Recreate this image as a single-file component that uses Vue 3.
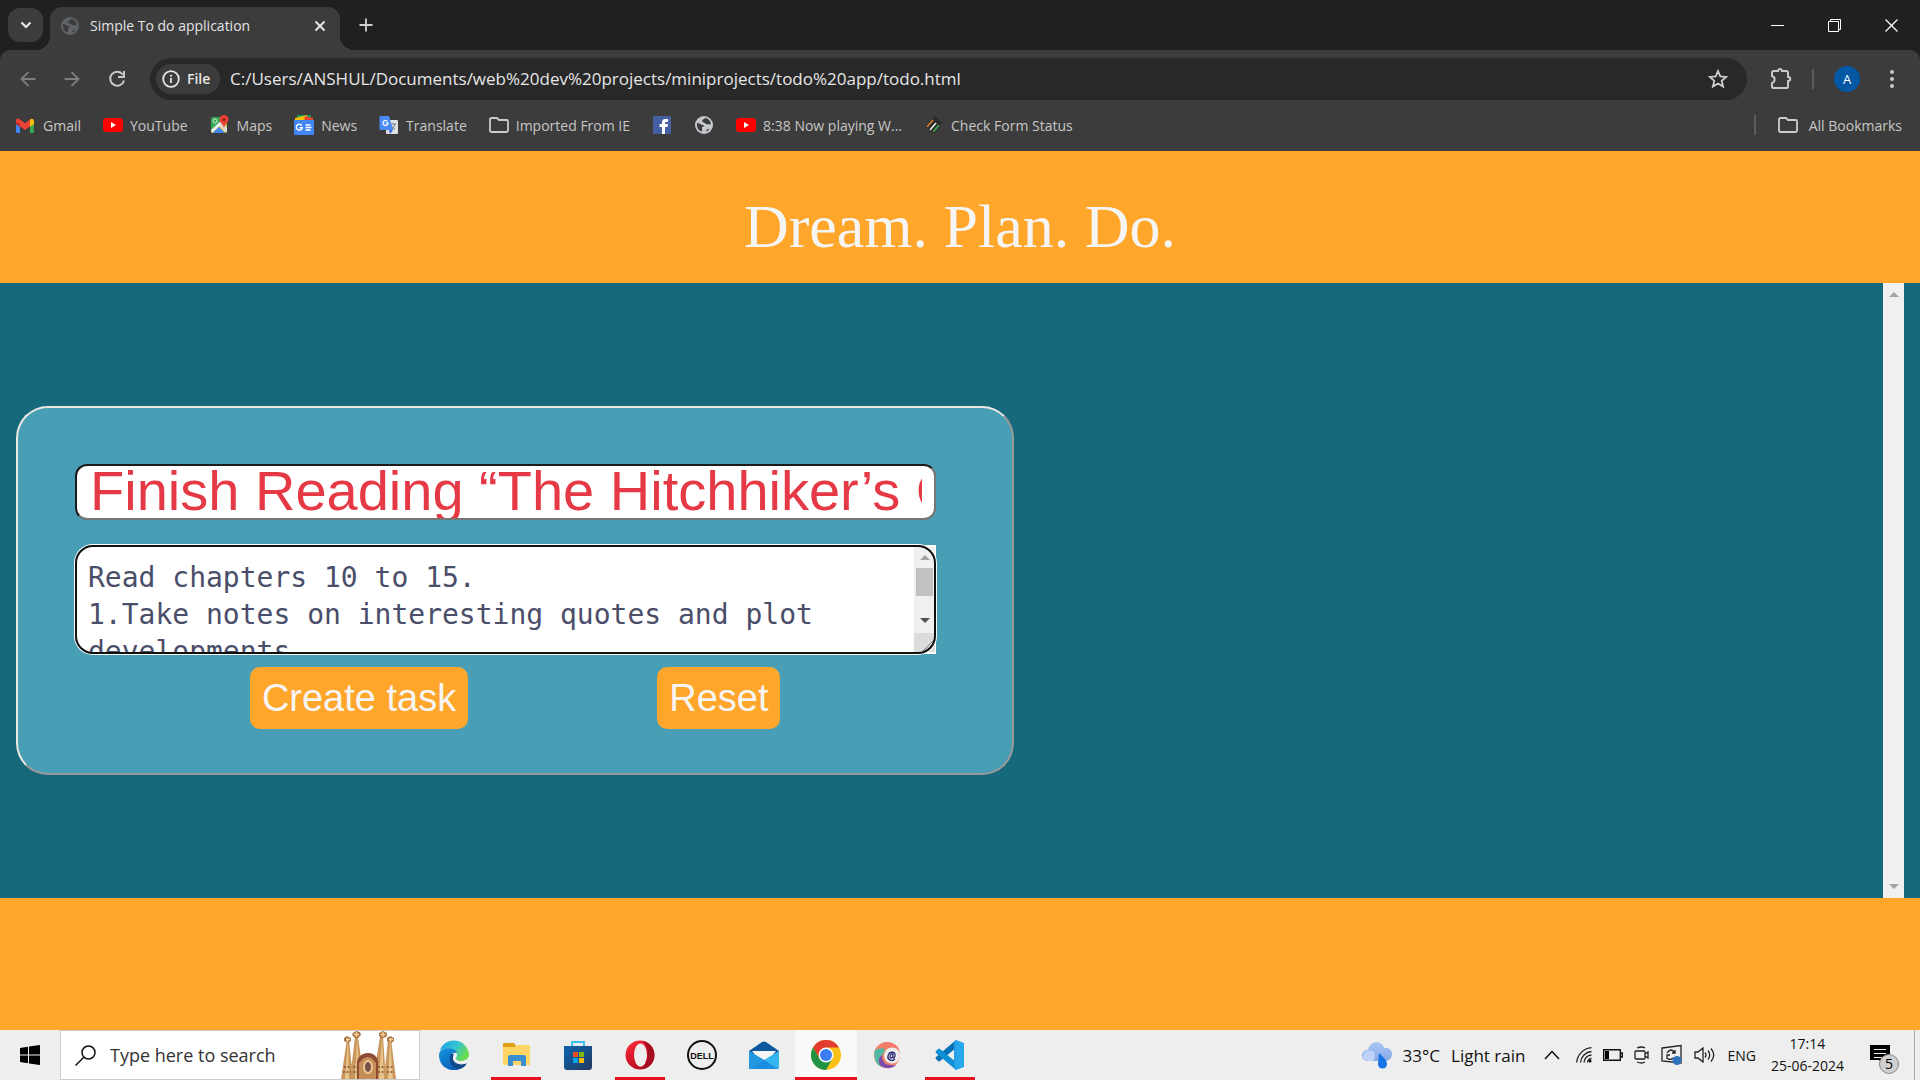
<script setup>
import { ref } from 'vue'

const title = ref('Finish Reading “The Hitchhiker’s Guide to the Galaxy”')
const details = ref('Read chapters 10 to 15.\n1.Take notes on interesting quotes and plot developments.\n2.Write a short summary.')
const address = ref('C:/Users/ANSHUL/Documents/web%20dev%20projects/miniprojects/todo%20app/todo.html')

const bookmarks = [
  { icon: 'gmail', label: 'Gmail' },
  { icon: 'youtube', label: 'YouTube' },
  { icon: 'maps', label: 'Maps' },
  { icon: 'news', label: 'News' },
  { icon: 'translate', label: 'Translate' },
  { icon: 'folder', label: 'Imported From IE' },
  { icon: 'facebook', label: '' },
  { icon: 'globe', label: '' },
  { icon: 'youtube', label: '8:38 Now playing W...' },
  { icon: 'form', label: 'Check Form Status' }
]

const apps = [
  { name: 'edge' },
  { name: 'explorer', open: true },
  { name: 'store' },
  { name: 'opera', open: true },
  { name: 'dell' },
  { name: 'mail' },
  { name: 'chrome', active: true },
  { name: 'swirl' },
  { name: 'code', open: true }
]

function reset() {
  title.value = ''
  details.value = ''
}
</script>

<template>
  <div class="screen">
    <div class="tabstrip">
      <button class="tab-search" aria-label="Search tabs">
        <svg width="12" height="8" viewBox="0 0 12 8"><path d="M1.500 1.500 6 6l4.500-4.500" fill="none" stroke="#e8e8e8" stroke-width="2.200" /></svg>
      </button>
      <div class="tab">
        <svg width="18" height="18" viewBox="0 0 18 18"><circle cx="9" cy="9" r="9" fill="#5f6368" /><path d="M2 7c3 0 3.500 2 6 2 1.500 0 1 2-1 2v4.500C4 15 1.500 12 2 7zM10 2c-1 1.500-3 1.500-3 3.500 1.500 0 1 1.500 3 1.500 1 2 3 1 5.800 1.500C16 5 13 2 10 2zM11 15.500c0-2 2-2.500 3.500-3-.5 1.500-2 2.500-3.500 3z" fill="#3c3c3c" /></svg>
        <span class="tab-title">Simple To do application</span>
        <button class="plain" aria-label="Close tab">
          <svg width="12" height="12" viewBox="0 0 12 12"><path d="m1.500 1.500 9 9m0-9-9 9" stroke="#e3e3e3" stroke-width="2" /></svg>
        </button>
      </div>
      <button class="plain new-tab" aria-label="New tab">
        <svg width="14" height="14" viewBox="0 0 14 14"><path d="M7 0.500v13M0.500 7h13" stroke="#d0d0d0" stroke-width="1.800" /></svg>
      </button>
      <div class="window-controls">
        <button class="plain" aria-label="Minimize"><svg width="13" height="13" viewBox="0 0 13 13"><path d="M0 6.500h13" stroke="#fff" /></svg></button>
        <button class="plain" aria-label="Restore"><svg width="13" height="13" viewBox="0 0 13 13"><path d="M.5 2.500h10v10H.5zM2.500 2.500v-2h10v10h-2" fill="none" stroke="#fff" /></svg></button>
        <button class="plain" aria-label="Close"><svg width="13" height="13" viewBox="0 0 13 13"><path d="m.5.5 12 12m0-12-12 12" stroke="#fff" stroke-width="1.200" /></svg></button>
      </div>
    </div>

    <div class="toolbar">
      <div class="nav">
        <button class="plain" aria-label="Back"><svg width="16" height="16" viewBox="0 0 16 16"><path d="M15.500 8H2M8.500 1 1.500 8l7 7" fill="none" stroke="#7d7d7d" stroke-width="1.800" /></svg></button>
        <button class="plain" aria-label="Forward"><svg width="16" height="16" viewBox="0 0 16 16"><path d="M.5 8H14M7.500 1l7 7-7 7" fill="none" stroke="#7d7d7d" stroke-width="1.800" /></svg></button>
        <button class="plain" aria-label="Reload"><svg width="18" height="18" viewBox="0 0 18 18"><path d="M14.800 4.500A7 7 0 1 0 16 10.500M16 1v6h-6" fill="none" stroke="#c9c9c9" stroke-width="2" /></svg></button>
      </div>
      <div class="omnibox">
        <button class="chip">
          <svg width="18" height="18" viewBox="0 0 18 18"><circle cx="9" cy="9" r="7.800" fill="none" stroke="#e6e6e6" stroke-width="1.800" /><path d="M9 8v5M9 4.800v2" stroke="#e6e6e6" stroke-width="1.800" /></svg>
          File
        </button>
        <input v-model="address" class="address" aria-label="Address" spellcheck="false">
        <button class="plain" aria-label="Bookmark this tab"><svg width="20" height="20" viewBox="0 0 20 20"><path d="m10 2 2.300 5.400 5.900.5-4.500 3.900 1.400 5.800L10 14.500l-5.100 3.100 1.400-5.800L1.800 7.900l5.900-.5z" fill="none" stroke="#cfcfcf" stroke-width="1.800" /></svg></button>
      </div>
      <div class="tools">
        <button class="plain" aria-label="Extensions"><svg width="22" height="22" viewBox="0 0 22 22"><path d="M2 4.500Q2 3 3.500 3H8c0-2.700 4-2.700 4 0h4.500Q18 3 18 4.500V9c3 0 3 4 0 4v5.500q0 1.500-1.500 1.500h-13Q2 20 2 18.500V15c3.500-1 3.500-6 0-7z" fill="none" stroke="#c9c9c9" stroke-width="2" /></svg></button>
        <span class="rule"></span>
        <button class="avatar" aria-label="Profile">A</button>
        <button class="plain" aria-label="Menu"><svg width="4" height="18" viewBox="0 0 4 18"><circle v-for="y in [2, 9, 16]" :key="y" cx="2" :cy="y" r="2" fill="#c9c9c9" /></svg></button>
      </div>
    </div>

    <nav class="bookmarks">
      <a v-for="(b, i) in bookmarks" :key="i" href="#" class="bookmark" :aria-label="b.label || b.icon">
        <svg width="20" height="20" viewBox="0 0 20 20">
          <g v-if="b.icon === 'gmail'"><path d="M0 5h4v13H1.500Q0 18 0 16.500z" fill="#4285f4" /><path d="M14 5h4v11.500q0 1.500-1.500 1.500H14z" fill="#34a853" /><path d="m0 5 4 3v4L0 9z" fill="#c5221f" /><path d="M0 6c0-2.500 2-3 3.500-2L9 8.200 14 4.500v7L9 15l-5-3.500V9L0 7z" fill="#ea4335" /><path d="M14 4.500c2-1.500 4-.5 4 2V9l-4 3z" fill="#fbbc04" /></g>
          <g v-else-if="b.icon === 'youtube'"><rect y="3" width="20" height="14" rx="3.500" fill="#f00" /><path d="m8 7 5 3-5 3z" fill="#fff" /></g>
          <g v-else-if="b.icon === 'maps'"><rect x="1" y="2" width="16" height="16" rx="2" fill="#34a853" /><path d="M1 16 16 2l1 14-3 2-5-5-7 5z" fill="#fbd04b" /><path d="m3 18 6-6 6 6z" fill="#4285f4" /><path d="m1 15 14-13 2 2L2 18z" fill="#eee" /><path d="m3 18 6-6 6 6z" fill="#4285f4" /><path d="m9 10 8 8v-5l-5-5z" fill="#dadce0" /><circle cx="5" cy="6" r="2" fill="none" stroke="#d8f2dd" /><path d="M14 0a4.500 4.500 0 0 1 4.500 4.500C18.500 8 15 8.500 14 13c-1-4.500-4.500-5-4.500-8.500A4.500 4.500 0 0 1 14 0z" fill="#ea4335" /><circle cx="14" cy="4.500" r="1.600" fill="#972018" /></g>
          <g v-else-if="b.icon === 'news'"><path d="M3 0h14v5H3z" fill="#0c9d58" /><path d="m1 3 12-3 2 6H1z" fill="#fbbc04" /><path d="m11 1 8 2v4h-9z" fill="#ea4335" /><rect y="5" width="20" height="15" rx="1" fill="#4285f4" /><path d="M7.800 10.500A3 3 0 1 0 8.300 12.700H5.500M11.500 10h5M11.500 12.500h6M11.500 15h5" fill="none" stroke="#fff" stroke-width="1.400" /></g>
          <g v-else-if="b.icon === 'translate'"><rect x="7" y="5" width="12" height="14" rx="1" fill="#dfe1e5" /><path d="M11 9h6m-3-1v1m2 0c-.5 3-3 5-4 5.500M12 10c1 2 3 4 4 4.500" fill="none" stroke="#6d7780" /><path d="M1 1h9l4 14H2q-1.500 0-1.500-1.500V1.500z" fill="#4a8af4" /><path d="m10 15 1 4 3-4z" fill="#3367d6" /><path d="M8.500 6.500A2.500 2.500 0 1 0 9 8H6.500" fill="none" stroke="#fff" stroke-width="1.200" /></g>
          <path v-else-if="b.icon === 'folder'" d="M1 4.500Q1 3 2.500 3H8l2 2h7.500Q19 5 19 6.500v9q0 1.500-1.500 1.500h-15Q1 17 1 15.500z" fill="none" stroke="#cdcdcd" stroke-width="1.800" />
          <g v-else-if="b.icon === 'facebook'"><rect x="1" y="1" width="18" height="18" rx="1" fill="#4560a0" /><path d="M10 19v-7H7.500V9H10V7.500C10 4.800 11.500 4 13 4h3v3h-2q-1 0-1 1v1h3l-.5 3H13v7z" fill="#fff" /></g>
          <g v-else-if="b.icon === 'globe'"><circle cx="10" cy="10" r="9" fill="#c4c7cc" /><path d="M3 8c3 0 3.500 2 6 2 1.500 0 1 2-1 2v4.500C5 16 2.500 13 3 8zM11 3c-1 1.500-3 1.500-3 3.500 1.500 0 1 1.500 3 1.500 1 2 3 1 5.800 1.500C17 6 14 3 11 3zM12 16.500c0-2 2-2.500 3.500-3-.5 1.500-2 2.500-3.500 3z" fill="#3c3c3c" /></g>
          <g v-else><path d="m11 1 7 7-8 11-9-7z" fill="#2c2c2c" /><path d="m3 12 6-7" stroke="#d9822f" stroke-width="1.600" /><path d="m6 15 6-7" stroke="#e8e8e8" stroke-width="1.600" /><path d="m9 17 6-7" stroke="#3fae49" stroke-width="1.600" /></g>
        </svg>
        <span v-if="b.label">{{ b.label }}</span>
      </a>
      <span class="rule push"></span>
      <a href="#" class="bookmark all">
        <svg width="20" height="20" viewBox="0 0 20 20"><path d="M1 4.500Q1 3 2.500 3H8l2 2h7.500Q19 5 19 6.500v9q0 1.500-1.500 1.500h-15Q1 17 1 15.500z" fill="none" stroke="#cdcdcd" stroke-width="1.800" /></svg>
        <span>All Bookmarks</span>
      </a>
    </nav>

    <header class="banner"><h1>Dream. Plan. Do.</h1></header>

    <main class="content">
      <div class="workspace">
        <form class="card" @submit.prevent @reset.prevent="reset">
          <input v-model="title" class="task-title" aria-label="Task title" spellcheck="false">
          <div class="details">
            <textarea v-model="details" aria-label="Task details" spellcheck="false"></textarea>
            <div class="details-bar">
              <svg class="up" width="10" height="5" viewBox="0 0 10 5"><path d="m0 5 5-5 5 5z" fill="#a3a3a3" /></svg>
              <span class="thumb"></span>
              <svg class="down" width="10" height="5" viewBox="0 0 10 5"><path d="m0 0 5 5 5-5z" fill="#505050" /></svg>
              <svg class="grip" width="21" height="19" viewBox="0 0 21 19"><path d="M0 0h21v19H0z" fill="#dcdcdc" /><path d="m9 18 11-11M14 18l6-6" stroke="#777" /></svg>
            </div>
          </div>
          <div class="actions">
            <button type="submit">Create task</button>
            <button type="reset">Reset</button>
          </div>
        </form>
      </div>
      <div class="page-bar">
        <svg width="10" height="5" viewBox="0 0 10 5"><path d="m0 5 5-5 5 5z" fill="#a3a3a3" /></svg>
        <svg width="10" height="5" viewBox="0 0 10 5"><path d="m0 0 5 5 5-5z" fill="#a3a3a3" /></svg>
      </div>
    </main>

    <footer class="foot"></footer>

    <div class="taskbar">
      <button class="plain start" aria-label="Start"><svg width="20" height="20" viewBox="0 0 20 20"><path d="m0 3 8-1.200v7.700H0zM9 1.600 20 0v9.500H9zM0 10.500h8v7.700L0 17zM9 10.500h11V20L9 18.400z" /></svg></button>
      <label class="search">
        <svg width="21" height="21" viewBox="0 0 21 21"><circle cx="13.500" cy="7.500" r="6.500" fill="none" stroke="#111" stroke-width="1.500" /><path d="m9 12-8.500 8.500" stroke="#111" stroke-width="1.500" /></svg>
        <input placeholder="Type here to search" aria-label="Search">
        <svg width="56" height="48" viewBox="0 0 56 48">
          <path d="m7 8-6 40h12L9 8zM15 6l-5 42h14L18 6zM40 6l-7 42h13L43 6zM48 8l-4 40h12L51 8z" fill="#c9975c" />
          <path d="M8 9 5 48h4zM17 7l-2 41h5zM42 7l-3 41h5zM50 9l-2 39h5z" fill="#e9c58b" />
          <path d="M17 48V30q3-8 11-8t10 8v18z" fill="#8d4b33" /><path d="M19 48V32q9-12 17 0v16z" fill="#c58d58" />
          <ellipse cx="28" cy="36" rx="5" ry="7" fill="#efc891" /><ellipse cx="28" cy="36" rx="3" ry="5" fill="#77534b" />
          <path d="M4 36h6M3 41h8M13 36h7M13 41h7M38 36h7M38 41h7M47 36h6M47 41h6" stroke="#80563a" stroke-width="1.500" stroke-dasharray="2 1.500" />
          <path d="m4 7 3-2 4 2v3l-3 2-4-2zM13 2l3-2 4 1 1 3-3 3h-3l-3-3zM39 2l4-2 4 2v3l-3 2h-3l-2-2zM47 7l3-2 4 2v3l-3 2-4-2z" fill="#a97545" />
          <path d="M16.500 1v5M14 3.500h5M43 1v5M40.500 3.500h5M7.500 7v4M6 8.500h4M50.500 7v4M49 8.500h4" stroke="#ffd49a" stroke-width="1.300" />
        </svg>
      </label>
      <div class="apps">
        <button v-for="a in apps" :key="a.name" class="app" :class="{ open: a.open, active: a.active }" :aria-label="a.name">
          <svg width="30" height="30" viewBox="0 0 30 30">
            <g v-if="a.name === 'edge'">
              <defs><linearGradient id="edgeTop" x1="0" y1="0" x2="1" y2="0.500"><stop offset="0" stop-color="#1b9de2" /><stop offset=".55" stop-color="#36c4d4" /><stop offset="1" stop-color="#68dd4d" /></linearGradient><linearGradient id="edgeLow" x1="0" y1="0" x2=".6" y2="1"><stop offset="0" stop-color="#1796e0" /><stop offset="1" stop-color="#0a5cb8" /></linearGradient></defs>
              <path d="M1 11C4-3 27-4 30 14c0 5-4 7-8 7-5 0-6-2-4-5 1-7-10-10-17-5z" fill="url(#edgeTop)" />
              <path d="M0 15C0 7 16 6 18 13c-7-2-8 8-1 12 3 1 7 0 9-1-3 5-8 7-13 6C5 29 0 23 0 15z" fill="url(#edgeLow)" />
              <path d="M12 14c-4 7 1 15 9 15 3-1 6-3 7-6-5 3-13 1-14-4 0-2 0-4 1-5z" fill="#114a8b" />
            </g>
            <g v-else-if="a.name === 'explorer'"><path d="M2 4q0-1 1-1h10l2 3v5H2z" fill="#dda013" /><path d="M2 7h12l2-2h12q1 0 1 1v19H2z" fill="#ffd666" /><path d="M7 26v-9q0-2 2-2h14q2 0 2 2v9h-5v-5h-8v5z" fill="#3b8ed0" /></g>
            <g v-else-if="a.name === 'store'"><defs><linearGradient id="bag" x2="1" y2="1"><stop stop-color="#0b64b0" /><stop offset="1" stop-color="#243a60" /></linearGradient></defs><path d="M9 7V2h12v5" fill="none" stroke="#3ec1f0" stroke-width="2" /><path d="M1 6h28v21q0 3-3 3H4q-3 0-3-3z" fill="url(#bag)" /><path d="M10 12h5v5h-5z" fill="#f25022" /><path d="M16 12h5v5h-5z" fill="#7fba00" /><path d="M10 18h5v5h-5z" fill="#00a4ef" /><path d="M16 18h5v5h-5z" fill="#ffb900" /></g>
            <g v-else-if="a.name === 'opera'"><defs><linearGradient id="ring" x2="0.500" y2="1"><stop stop-color="#ff2a38" /><stop offset="1" stop-color="#b40d20" /></linearGradient></defs><ellipse cx="15" cy="15" rx="14.500" ry="14.500" fill="url(#ring)" /><path d="M17 1c17 2 16 27 0 28 8-5 8-23 0-28z" fill="#a50f20" /><ellipse cx="15.500" cy="15" rx="6.500" ry="11.500" fill="#eee" /></g>
            <g v-else-if="a.name === 'dell'"><circle cx="15" cy="15" r="14" fill="none" stroke="#111" stroke-width="2" /><text x="15" y="18.500" text-anchor="middle" font-family="Liberation Sans, sans-serif" font-weight="700" font-size="9" fill="#111">DELL</text></g>
            <g v-else-if="a.name === 'mail'"><path d="M0 11 13 2q2-1 4 0l13 9v5H0z" fill="#0d579f" /><path d="M3 11h24l-9 11h-6z" fill="#f5f5f5" /><path d="m0 11 15 9 15-9v16q0 2-1 2H0z" fill="#36b6ee" /><path d="m0 11 15 9-14 9H0z" fill="#2299df" /><path d="m15 20 14 9H1z" fill="#1c8ee0" /></g>
            <g v-else-if="a.name === 'chrome'"><circle cx="15" cy="15" r="15" fill="#fbc116" /><path d="M2 7.500A15 15 0 0 1 28 7.500H15v7.500l-6.500 4z" fill="#e33b2e" /><path d="M2 7.500A15 15 0 0 0 15 30l6.500-11.500H15l-6.500 0z" fill="#229342" /><circle cx="15" cy="15" r="7.500" fill="#fff" /><circle cx="15" cy="15" r="6" fill="#3b7df0" /></g>
            <g v-else-if="a.name === 'swirl'"><circle cx="14" cy="15" r="13" fill="#ee806c" /><path d="M2 10C10 6 15 9 9 15c-4 5-2 10 0 12C3 25 0 18 2 10z" fill="#55b8a4" /><path d="M9 15c0 9 5 11 14 10-4 4-11 4-15 1-3-4-3-8 1-11z" fill="#7f4bab" /><path d="M8 5c7-5 16-2 18 5l-9 0C14 6 11 5 8 5z" fill="#f47a6c" /><circle cx="19" cy="15.500" r="8" fill="#eee" /><path d="M22 19c-3 3-8 1-7-3 1-5 8-5 7 0-1 3-3 3-2-2-3-1-4 4-2 4 1 0 2-2 2-4" fill="none" stroke="#282476" stroke-width="1.300" /></g>
            <g v-else><path d="m21 0 8 3v24l-8 3z" fill="#27a8ec" /><path d="M21 0v8L5 21q-1 1-2 0l-2-2q-1-1 0-2z" fill="#0872b8" /><path d="M21 30v-8L5 9Q4 8 3 9l-2 2q-1 1 0 2z" fill="#118fd5" /><path d="M21 0v30q-2-1-2-3V3q0-2 2-3z" fill="#229de3" /></g>
          </svg>
        </button>
      </div>
      <div class="tray">
        <svg width="30" height="30" viewBox="0 0 30 30"><defs><linearGradient id="cloud" y2="1" x2="0"><stop stop-color="#a7c6f5" /><stop offset="1" stop-color="#8ba9e6" /></linearGradient></defs><path d="M6 21c-8 0-8-11 0-11C8 0 20 0 22 8c10-2 11 13 1 13z" fill="url(#cloud)" /><path d="M3 12c5-3 10-1 10 4 0 2-1 3-2 5H6c-4 0-7-4-3-9z" fill="#bfd3f7" /><path d="M17 13c4 4 8 7 8 11 0 6-9 6-9 0z" fill="#1673e6" /></svg>
        <span class="weather"><span>33°C</span><span>Light rain</span></span>
        <svg class="chevron" width="16" height="10" viewBox="0 0 16 10"><path d="m1 9 7-7.500L15 9" fill="none" stroke="#111" stroke-width="1.500" /></svg>
        <svg width="16" height="16" viewBox="0 0 16 16"><g fill="none" stroke="#222" stroke-width="1.300"><path d="M.7 15.500A16 16 0 0 1 15.500.7M4.500 15.500a12 12 0 0 1 11-11M8 15.500a8 8 0 0 1 7.500-7.500" /><path d="M11.500 15.500a4 4 0 0 1 4-4" /></g><circle cx="14" cy="14" r="1.500" /></svg>
        <svg width="20" height="12" viewBox="0 0 20 12"><path d="M.7.700h16.600v10.600H.7zM18 4h1.300v4H18" fill="none" stroke="#111" stroke-width="1.400" /><path d="M2 2h4v8H2z" /></svg>
        <svg width="16" height="18" viewBox="0 0 16 18"><path d="M3 2q5-2 8 0M3 16q5 2 8 0M2 5h8q1 0 1 1v6q0 1-1 1H2q-1 0-1-1V6q0-1 1-1zM11 8l3-2v6l-3-2" fill="none" stroke="#222" stroke-width="1.300" /></svg>
        <svg width="22" height="22" viewBox="0 0 22 22"><path d="m1 4 19-2.500V19L1 17z" fill="none" stroke="#222" stroke-width="1.300" /><path d="M6 9q4-6 8 0m0-3v3h-3M6 15v-4h3m-3 3q3 3 6 0" fill="none" stroke="#222" stroke-width="1.300" /><circle cx="16" cy="16.500" r="4.500" fill="#2f73bc" /></svg>
        <svg width="22" height="16" viewBox="0 0 22 16"><path d="M1 5h3l5-4v14l-5-4H1zM11 5.500q2 2.500 0 5M14 3.500q3.500 4.500 0 9M17 1.500q5.500 6.500 0 13" fill="none" stroke="#222" stroke-width="1.300" /></svg>
        <span class="lang">ENG</span>
        <time class="clock"><span>17:14</span><span>25-06-2024</span></time>
        <button class="plain notes" aria-label="Notifications">
          <svg width="20" height="20" viewBox="0 0 20 20"><path d="M0 0h20v15h-6v5l-5-5H0z" /><path d="M4 4.500h12M4 8.500h12M4 12.500h8" stroke="#eee" /></svg>
          <span class="badge">5</span>
        </button>
        <span class="desktop-edge"></span>
      </div>
    </div>
  </div>
</template>

<style>
html, body { margin: 0; }
</style>

<style scoped>
.screen { display: flex; flex-direction: column; min-height: 100vh; background: #16697a; font-family: "Open Sans", "Noto Sans", sans-serif; }
.screen * { box-sizing: border-box; }
svg { display: block; flex: none; }
button { font: inherit; border: 0; margin: 0; padding: 0; cursor: pointer; }
input, textarea { min-width: 0; border: 0; outline: 0; margin: 0; padding: 0; }
.plain { background: none; display: flex; align-items: center; justify-content: center; }

.tabstrip { height: 50px; flex: none; display: flex; align-items: center; background: #1f2120; padding-left: 8px; }
.tab-search { width: 35px; height: 34px; border-radius: 12px; background: #3c3c3c; display: grid; place-items: center; margin-right: 7px; }
.tab { position: relative; align-self: flex-end; width: 290px; height: 43px; padding: 0 14px 6px 11px; display: flex; align-items: center; background: #3c3c3c; border-radius: 12px 12px 0 0; color: #e3e3e3; font-size: 14px; }
.tab::before, .tab::after { content: ""; position: absolute; bottom: 0; width: 14px; height: 14px; }
.tab::before { right: 100%; background: radial-gradient(circle at 0 0, transparent 14px, #3c3c3c 14px); }
.tab::after { left: 100%; background: radial-gradient(circle at 100% 0, transparent 14px, #3c3c3c 14px); }
.tab-title { flex: 1; margin-left: 11px; white-space: nowrap; }
.new-tab { margin-left: 19px; }
.window-controls { display: flex; margin-left: auto; height: 100%; }
.window-controls .plain { width: 57px; }

.toolbar { display: flex; align-items: center; height: 57px; flex: none; background: #1f2120; position: relative; isolation: isolate; }
.toolbar::before { content: ""; position: absolute; inset: 0; z-index: -1; background: #3c3c3c; border-radius: 10px 10px 0 0; }
.nav { display: flex; gap: 28px; width: 150px; padding-left: 20px; }
.omnibox { flex: 1; height: 42px; border-radius: 21px; background: #282828; display: flex; align-items: center; padding: 0 19px 0 6px; }
.chip { height: 30px; width: 64px; border-radius: 15px; background: #3c3c3c; color: #e6e6e6; display: flex; align-items: center; gap: 7px; padding-left: 6px; font-size: 14px; font-weight: 600; }
.address { flex: 1; margin-left: 10px; background: none; color: #e6e6e6; font: 17px "Open Sans", "Noto Sans", sans-serif; }
.tools { display: flex; align-items: center; width: 173px; padding-left: 23px; }
.rule { width: 2px; height: 20px; background: #5c5c5c; flex: none; }
.tools .rule { margin: 0 20px; }
.avatar { width: 26px; height: 26px; border-radius: 50%; background: #0558a4; color: #fff; font-size: 13px; margin-right: 30px; }

.bookmarks { height: 44px; flex: none; background: #3c3c3c; display: flex; align-items: center; padding: 0 18px 8px 16px; gap: 22px; white-space: nowrap; }
.bookmark { display: flex; align-items: center; gap: 7px; color: #c7c7c7; text-decoration: none; font-size: 14px; }
.push { margin-left: auto; }
.bookmark.all { gap: 11px; }

.banner { height: 132px; flex: none; background: #ffa62b; display: flex; align-items: center; justify-content: center; padding-top: 18px; }
.banner h1 { margin: 0; color: #f5f5f5; font: 400 62px "Liberation Serif", serif; }
.content { flex: 1; display: flex; padding-right: 16px; background: #16697a; }
.workspace { flex: 1; display: flex; align-items: center; padding-left: 16px; }
.page-bar { width: 21px; background: #f0f0f0; display: flex; flex-direction: column; justify-content: space-between; align-items: center; padding: 9px 0; }
.card { width: 52vw; background: #489fb5; border: 2px solid; border-color: #ede7e3 #999 #999 #ede7e3; border-radius: 32px; padding: 56px 76px 44px 57px; display: flex; flex-direction: column; }
.task-title { width: 100%; height: 56px; background: #fff; border: 2px solid; border-color: #1b1b1b #767676 #767676 #1b1b1b; border-radius: 12px; padding: 0 12px 3px 13px; color: #e63946; font: 56px/52px "Liberation Sans", sans-serif; }
.details { position: relative; display: flex; height: 109px; margin-top: 25px; padding: 2px 1px 2px 2px; background: #fff; border-radius: 18px 0 0 18px; }
.details::after { content: ""; position: absolute; inset: 0; border: 2px solid #101010; border-radius: 18px; box-shadow: 0 0 0 1px #fff; pointer-events: none; }
textarea { flex: 1; height: 100%; background: none; resize: none; overflow: hidden; padding: 12px 10px 0 11px; color: #4a4e69; font: 28px/37px "DejaVu Sans Mono", monospace; }
.details-bar { width: 21px; background: #f0f0f0; display: flex; flex-direction: column; align-items: center; }
.up { margin: 8px 0; }
.thumb { width: 17px; height: 28px; background: #c1c1c1; }
.down { margin-top: 22px; }
.grip { margin-top: auto; }
.actions { display: flex; justify-content: center; gap: 189px; margin: 13px -19px 0 0; }
.actions button { height: 62px; padding: 0 12px; border-radius: 10px; background: #ffa62b; color: #f5f5f5; font: 38px "Liberation Sans", sans-serif; white-space: nowrap; }
.foot { height: 132px; flex: none; background: #ffa62b; }

.taskbar { height: 50px; flex: none; background: #eee; display: flex; color: #111; white-space: nowrap; }
.start { width: 60px; }
.search { width: 360px; border: 1px solid #ccc; background: #fff; display: flex; align-items: center; padding: 0 23px 0 14px; }
.search input { flex: 1; margin-left: 14px; font: 18px "Open Sans", "Noto Sans", sans-serif; background: none; }
.search input::placeholder { color: #333; opacity: 1; }
.apps { display: flex; padding-left: 3px; }
.app { width: 62px; background: none; display: grid; place-items: center; position: relative; }
.app.active { background: #f9f9f9; }
.app.open::after, .app.active::after { content: ""; position: absolute; left: 6px; right: 6px; bottom: 0; height: 3px; background: #e81123; }
.app.active::after { left: 0; right: 0; }
.tray { margin-left: auto; display: flex; align-items: center; gap: 11px; padding-right: 5px; }
.weather { display: flex; gap: 11px; font-size: 17px; margin-right: 8px; }
.chevron { margin-right: 5px; }
.lang { font-size: 14px; }
.clock { display: flex; flex-direction: column; align-items: center; font-size: 14px; line-height: 22px; margin: 0 15px 0 4px; }
.notes { position: relative; }
.badge { position: absolute; left: 9px; top: 9px; width: 20px; height: 20px; border-radius: 50%; border: 1px solid #888; background: #d0d0d0; font-size: 14px; line-height: 18px; }
.desktop-edge { width: 1px; align-self: stretch; background: #aaa; margin-left: 13px; }
</style>
